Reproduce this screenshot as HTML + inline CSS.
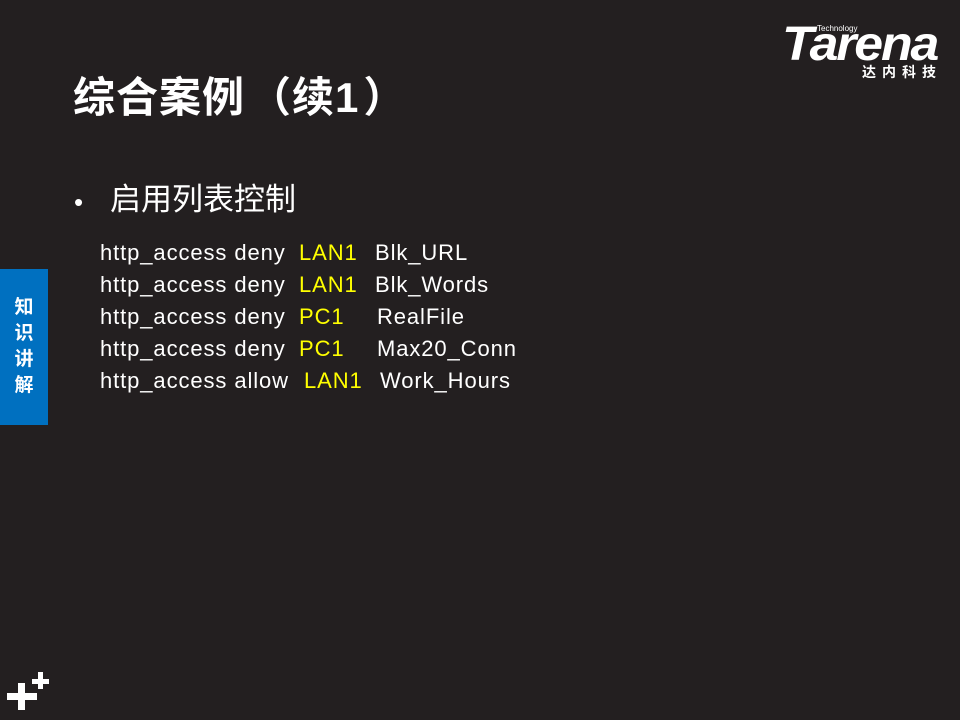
<!DOCTYPE html>
<html><head><meta charset="utf-8"><style>
body{margin:0;width:960px;height:720px;background:#231f20;position:relative;overflow:hidden;font-family:"Liberation Sans","Noto Sans CJK SC",sans-serif;color:#fff}
.a{position:absolute;white-space:nowrap}
.t{left:73px;top:70px;font-size:42px;font-weight:bold;line-height:56px;letter-spacing:1px}
.b{left:110px;top:178px;font-size:31px;line-height:44px}
.c{font-size:22px;line-height:32px;letter-spacing:0.9px}
.y{color:#ffff00}
.tab{left:0;top:269px;width:48px;height:156px;background:#0070c0}
.tabt{left:0;top:295px;width:48px;text-align:center;font-weight:bold;font-size:19px;line-height:26px}
</style></head><body>
<div class="a t">综合案例<span style="margin-left:4px">（</span>续1<span style="margin-left:4px">）</span></div>
<div class="a" style="left:74px;top:182px;font-size:26px;line-height:40px">•</div>
<div class="a b">启用列表控制</div>
<div class="a c" style="left:100px;top:237px">http_access deny</div><div class="a c y" style="left:299px;top:237px">LAN1</div><div class="a c" style="left:375px;top:237px">Blk_URL</div>
<div class="a c" style="left:100px;top:269px">http_access deny</div><div class="a c y" style="left:299px;top:269px">LAN1</div><div class="a c" style="left:375px;top:269px">Blk_Words</div>
<div class="a c" style="left:100px;top:301px">http_access deny</div><div class="a c y" style="left:299px;top:301px">PC1</div><div class="a c" style="left:377px;top:301px">RealFile</div>
<div class="a c" style="left:100px;top:333px">http_access deny</div><div class="a c y" style="left:299px;top:333px">PC1</div><div class="a c" style="left:377px;top:333px">Max20_Conn</div>
<div class="a c" style="left:100px;top:365px">http_access allow</div><div class="a c y" style="left:304px;top:365px">LAN1</div><div class="a c" style="left:380px;top:365px">Work_Hours</div>
<div class="a tab"></div>
<div class="a tabt">知<br>识<br>讲<br>解</div>
<div class="a" style="left:782px;top:20px;font-size:48px;font-weight:bold;font-style:italic;letter-spacing:-2px;line-height:50px;transform:scaleX(1.08);transform-origin:left">Tarena</div>
<div class="a" style="left:817px;top:24px;font-size:8px;line-height:10px">Technology</div>
<div class="a" style="left:862px;top:64px;font-size:14px;font-weight:bold;letter-spacing:6px;line-height:16px">达内科技</div>
<svg class="a" style="left:0;top:660px" width="60" height="60"><g fill="#fff"><rect x="7" y="33" width="30" height="7"/><rect x="18" y="23" width="7" height="27"/><rect x="32" y="19" width="17" height="5"/><rect x="38" y="12" width="5" height="17"/></g></svg>
</body></html>
